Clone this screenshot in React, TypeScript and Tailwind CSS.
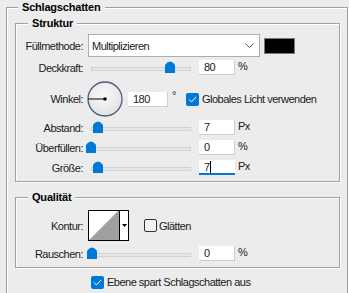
import React from 'react';

const font = { fontFamily: '"Liberation Sans", Arial, sans-serif' };

const Check = ({ checked }: { checked: boolean }) =>
  checked ? (
    <span className="w-[13px] h-[13px] rounded-[2px] bg-[#0078d7] flex items-center justify-center shrink-0">
      <svg width="9" height="7" viewBox="0 0 9 7">
        <polyline points="1,3.5 3.5,6 8,1" fill="none" stroke="#fff" strokeWidth="1" />
      </svg>
    </span>
  ) : (
    <span className="w-[13px] h-[13px] rounded-[2px] border border-[#333] bg-[#f4f4f4] shrink-0" />
  );

const Thumb = ({ left }: { left: number }) => (
  <svg className="absolute top-[1px]" style={{ left }} width="10" height="12" viewBox="0 0 10 12">
    <path d="M0 5 Q0 2 5 0.5 Q10 2 10 5 V12 H0 Z" fill="#0078d7" />
  </svg>
);

const Slider = ({ left }: { left: number }) => (
  <div className="relative w-[106px] h-[15px] flex items-center shrink-0">
    <div className="ml-[3px] mt-[2px] w-[100px] h-[4px] bg-[#e6e6e6] border border-[#d2d2d2]" />
    <Thumb left={left} />
  </div>
);

const Field = ({ value, w = 36, focus = false }: { value: string; w?: number; focus?: boolean }) => (
  <div
    className={`h-[15px] bg-white flex items-center pl-[5px] border-[#cfcfcf] ${focus ? 'border-b-2 border-b-[#0078d7]' : 'border-r border-b'}`}
    style={{ width: w }}
  >
    {value}
    {focus && <span className="w-px h-[12px] bg-black" />}
  </div>
);

const Label = ({ children }: { children: React.ReactNode }) => (
  <span className="w-[67px] text-right shrink-0">{children}</span>
);

const SliderRow = ({ label, left, value, unit, focus = false, cls }: any) => (
  <div className={`flex items-center h-[15px] ${cls}`}>
    <Label>{label}</Label>
    <div className="ml-[5px]">
      <Slider left={left} />
    </div>
    <div className="ml-[5px]">
      <Field value={value} focus={focus} />
    </div>
    <span className="ml-[3px] -mt-[3px]">{unit}</span>
  </div>
);

const Group = ({ title, children, cls }: any) => (
  <fieldset className={`border border-[#a0a0a0] shadow-[1px_1px_0_#fff,inset_1px_1px_0_#fff] ${cls}`}>
    <legend className="ml-[12px] px-[4px] bg-[#ececec] font-bold leading-[14px] tracking-[-0.2px] text-black">{title}</legend>
    {children}
  </fieldset>
);

export default function App() {
  return (
    <div className="w-[349px] h-[293px] overflow-hidden bg-[#ececec] text-[11px] leading-[14px] tracking-[-0.5px] text-[#1a1a1a]" style={font}>
      <fieldset className="ml-[6px] w-[342px] h-[320px] border border-[#a0a0a0] shadow-[1px_1px_0_#fff,inset_1px_1px_0_#fff] pt-[2px]">
        <legend className="ml-[11px] px-[4px] bg-[#ececec] font-bold leading-[14px] tracking-[-0.2px] text-black">Schlagschatten</legend>

        <Group title="Struktur" cls="ml-[8px] w-[325px] pt-[4px] pb-[6px]">
          <div className="flex items-center h-[23px]">
            <Label>Füllmethode:</Label>
            <div className="ml-[5px] w-[172px] h-[23px] bg-white border border-[#adadad] flex items-center pl-[3px] pr-[5px] justify-between">
              <span>Multiplizieren</span>
              <svg width="9" height="5" viewBox="0 0 9 5">
                <polyline points="0.5,0.5 4.5,4.5 8.5,0.5" fill="none" stroke="#555" strokeWidth="1" />
              </svg>
            </div>
            <div className="ml-[4px] w-[31px] h-[16px] bg-black border border-[#7a7a7a]" />
          </div>

          <SliderRow label="Deckkraft:" left={77} value="80" unit="%" cls="mt-[3px]" />

          <div className="flex items-center h-[36px] mt-[6px]">
            <Label>Winkel:</Label>
            <svg className="ml-[4px]" width="36" height="36" viewBox="0 0 36 36">
              <defs>
                <radialGradient id="dial" cx="0.45" cy="0.4" r="0.6">
                  <stop offset="0" stopColor="#fafafa" />
                  <stop offset="1" stopColor="#e2e2e2" />
                </radialGradient>
              </defs>
              <circle cx="18" cy="18" r="17" fill="url(#dial)" stroke="#4f5a7c" strokeWidth="1.3" />
              <line x1="1" y1="18" x2="18" y2="18" stroke="#000" strokeWidth="1" />
              <rect x="16.5" y="16.5" width="3" height="3" fill="#000" />
            </svg>
            <div className="ml-[5px]">
              <Field value="180" w={40} />
            </div>
            <span className="ml-[4px] -mt-[8px]">°</span>
            <div className="ml-[10px] flex items-center gap-[3px]">
              <Check checked />
              <span>Globales Licht verwenden</span>
            </div>
          </div>

          <SliderRow label="Abstand:" left={5} value="7" unit="Px" cls="mt-[3px]" />
          <SliderRow label="Überfüllen:" left={-2} value="0" unit="%" cls="mt-[5px]" />
          <SliderRow label="Größe:" left={5} value="7" unit="Px" focus cls="mt-[5px]" />
        </Group>

        <Group title="Qualität" cls="ml-[8px] w-[325px] mt-[8px] pt-[6px] pb-[6px]">
          <div className="flex items-center h-[31px]">
            <Label>Kontur:</Label>
            <div className="ml-[5px] w-[41px] h-[31px] border border-black flex bg-white">
              <svg width="30" height="29" viewBox="0 0 30 29">
                <polygon points="0,29 29,0 30,0 30,29" fill="#a0a0a0" />
              </svg>
              <div className="flex-1 border-l border-black flex items-center justify-center">
                <svg width="5" height="3" viewBox="0 0 5 3">
                  <polygon points="0,0 5,0 2.5,3" fill="#000" />
                </svg>
              </div>
            </div>
            <div className="ml-[15px] flex items-center gap-[2px]">
              <Check checked={false} />
              <span>Glätten</span>
            </div>
          </div>
          <SliderRow label="Rauschen:" left={-1} value="0" unit="%" cls="mt-[5px]" />
        </Group>

        <div className="mt-[7px] ml-[84px] flex items-center gap-[3px]">
          <Check checked />
          <span>Ebene spart Schlagschatten aus</span>
        </div>
      </fieldset>
    </div>
  );
}
